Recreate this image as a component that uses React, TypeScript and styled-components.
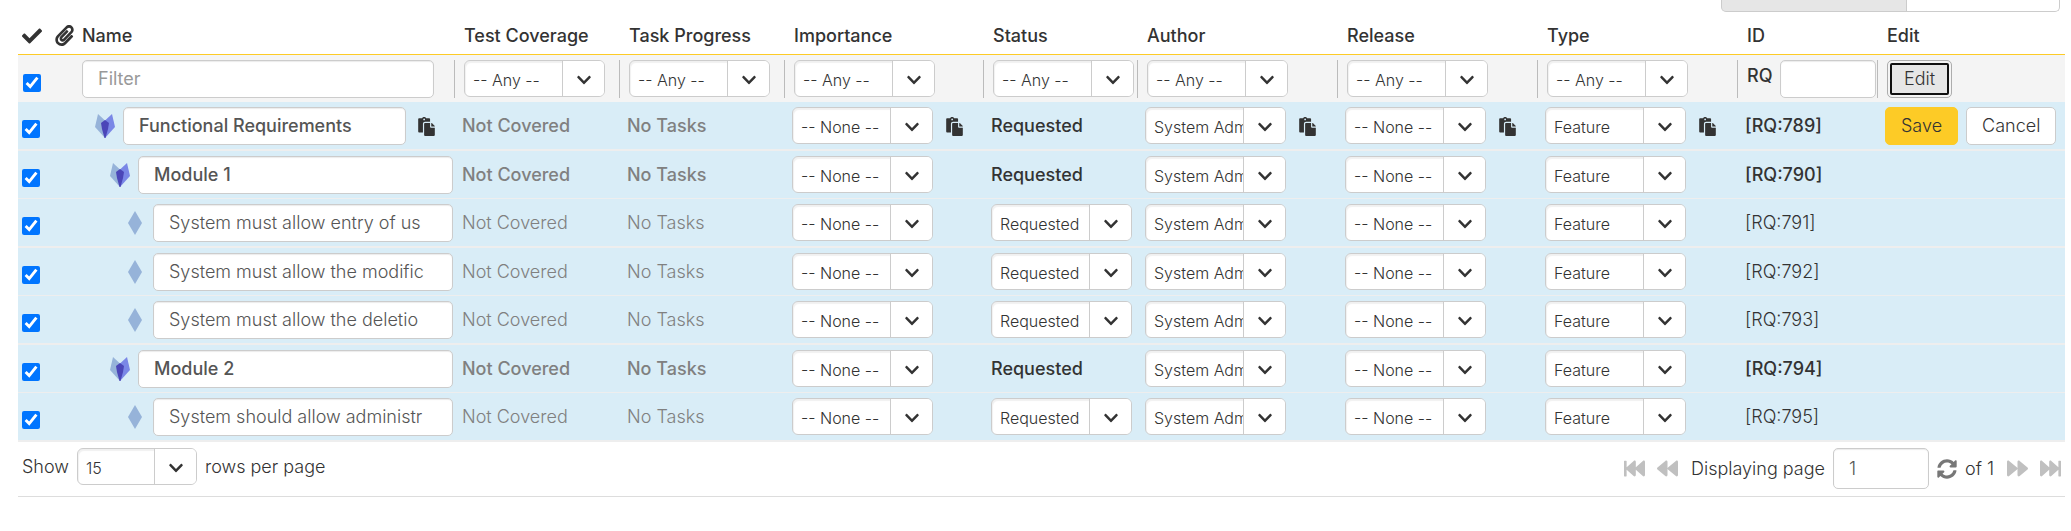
import React from "react";
import styled, { createGlobalStyle, css } from "styled-components";
import {
  FaBackward,
  FaCheck,
  FaChevronDown,
  FaFastBackward,
  FaFastForward,
  FaForward,
  FaPaperclip,
  FaPaste,
  FaSyncAlt,
} from "react-icons/fa";

const GlobalStyle = createGlobalStyle`
  *, *::before, *::after { box-sizing: border-box; }
  body {
    margin: 0;
    background: #fff;
    color: #333;
    font: 300 18px/38px Inter, "Open Sans", sans-serif;
  }
  button, input, select { font: inherit; color: inherit; margin: 0; }
`;

const Page = styled.main`
  padding: 0 6px 0 18px;
  overflow-x: auto;
`;

const Toolbar = styled.div`
  display: flex;
  justify-content: flex-end;
  padding-right: 5px;
`;

const ViewButton = styled.button<{ $active?: boolean }>`
  width: ${(p) => (p.$active ? 186 : 153)}px;
  height: 12px;
  padding: 0;
  border: 1px solid #ccc;
  border-top: 0;
  border-left-width: ${(p) => (p.$active ? 1 : 0)}px;
  border-radius: ${(p) => (p.$active ? "0 0 0 5px" : "0 0 5px 0")};
  background: ${(p) => (p.$active ? "#e6e6e6" : "#fff")};
`;

const Grid = styled.table`
  width: 100%;
  min-width: 1980px;
  table-layout: fixed;
  border-collapse: separate;
  border-spacing: 0;
`;

const HeadCell = styled.th<{ $flush?: boolean }>`
  padding: 5px 0 0 ${(p) => (p.$flush ? 4 : 10)}px;
  border-bottom: 1px solid #fdcb26;
  font-weight: 500;
  line-height: 37px;
  text-align: left;
  white-space: nowrap;
  svg { display: block; }
`;

const FilterRow = styled.tr`
  background: #f4f4f4;
`;

const FilterCell = styled.td`
  padding: 5px 0 4px;
  vertical-align: top;
`;

const FilterBox = styled.div<{ $divided?: boolean }>`
  display: flex;
  gap: 7px;
  height: 38px;
  padding-left: ${(p) => (p.$divided ? 9 : 4)}px;
  border-left: ${(p) => (p.$divided ? "1px solid #bbb" : "0")};
`;

const FilterLabel = styled.label`
  font-weight: 500;
  line-height: 32px;
`;

const DataRow = styled.tr<{ $group: boolean }>`
  background: #d9edf7;
  font-weight: ${(p) => (p.$group ? 500 : 300)};
  & > td { border-bottom: 1px solid #eee; }
  &:nth-child(odd) > td { border-bottom-width: 2px; }
`;

const cellBase = css`
  padding-top: 5px;
  padding-bottom: 4px;
  vertical-align: top;
  white-space: nowrap;
`;

const TextCell = styled.td<{ $muted?: boolean }>`
  ${cellBase}
  padding-left: 8px;
  color: ${(p) => (p.$muted ? "#808080" : "#333")};
`;

const ControlCell = styled.td`
  ${cellBase}
  padding-left: 8px;
`;

const ControlLine = styled.div`
  display: flex;
  align-items: center;
  gap: 12px;
  height: 38px;
`;

const ButtonLine = styled(ControlLine)`
  gap: 8px;
`;

const NameCell = styled.td<{ $level: number }>`
  ${cellBase}
  padding-left: ${(p) => 17 + p.$level * 15}px;
`;

const NameLine = styled.div`
  display: flex;
  align-items: center;
  gap: 8px;
  height: 38px;
  svg { flex: none; }
`;

const CheckCell = styled.td<{ $filter?: boolean }>`
  padding: ${(p) => (p.$filter ? "19px 0 0 5px" : "18px 0 0 4px")};
  vertical-align: top;
  line-height: 0;
`;

const Tick = styled.input`
  width: 18px;
  height: 18px;
`;

const TextBox = styled.input<{ $width?: number; $tall?: boolean }>`
  flex: ${(p) => (p.$width ? "none" : "1")};
  width: ${(p) => (p.$width ? `${p.$width}px` : "auto")};
  min-width: 0;
  height: ${(p) => (p.$tall ? 41 : 38)}px;
  padding: 0 15px;
  border: 1px solid #ccc;
  border-radius: 5px;
  background: #fff;
  box-shadow: inset 0 1px 1px rgba(0, 0, 0, 0.08);
  color: #555;
  font-weight: inherit;
  &::placeholder { color: #999; font-weight: 400; opacity: 1; }
`;

const FilterText = styled(TextBox)`
  margin-right: 20px;
`;

const CopyButton = styled.button`
  flex: none;
  display: flex;
  padding: 0;
  border: 0;
  background: none;
  color: #333;
`;

const NameCopyButton = styled(CopyButton)`
  margin: 0 17px 0 3px;
`;

const ComboFrame = styled.span<{ $width: number }>`
  display: grid;
  grid-template-columns: 1fr 42px;
  flex: none;
  align-self: flex-start;
  width: ${(p) => p.$width}px;
  height: 37px;
  border: 1px solid #ccc;
  border-radius: 6px;
  background: #fff;
  box-shadow: inset 1px 2px 1px rgba(0, 0, 0, 0.06);
  overflow: hidden;
`;

const ComboSelect = styled.select`
  grid-area: 1 / 1 / 2 / 3;
  width: 100%;
  padding: 0 0 0 8px;
  border: 0;
  background: none;
  appearance: none;
  font-size: 16px;
  font-weight: 300;
`;

const ComboArrow = styled.span`
  grid-area: 1 / 2 / 2 / 3;
  display: flex;
  align-items: center;
  justify-content: center;
  border-left: 1px solid #ccc;
  background: #fff;
  pointer-events: none;
`;

const Button = styled.button<{ $kind?: "primary" | "focused" }>`
  height: 38px;
  padding: 0 15px;
  border: 1px solid #ccc;
  border-radius: 5px;
  background: #fff;
  font-weight: 300;
  line-height: 36px;
  ${(p) =>
    p.$kind === "primary" &&
    css`
      border-color: #fdcb26;
      background: #fdcb26;
    `}
  ${(p) =>
    p.$kind === "focused" &&
    css`
      padding: 0 16px;
      border-color: #adadad;
      background: #e6e6e6;
      outline: 2px solid #101010;
      outline-offset: -5px;
      box-shadow: inset 0 0 0 3px #f4f4f4;
    `}
`;

const Pager = styled.footer`
  display: flex;
  justify-content: space-between;
  align-items: flex-start;
  min-width: 1980px;
  height: 55px;
  padding: 6px 4px 0;
  border-bottom: 1px solid #ddd;
`;

const PagerSide = styled.div`
  display: flex;
  align-items: center;
  gap: 8px;
  white-space: nowrap;
`;

const PageNav = styled.div`
  display: flex;
  gap: 12px;
  &:first-child { margin-right: 5px; }
  &:last-child { margin-left: 5px; }
`;

const NavButton = styled.button<{ $strong?: boolean }>`
  display: flex;
  padding: 0;
  border: 0;
  background: none;
  color: ${(p) => (p.$strong ? "#777" : "#c0c0c0")};
`;

function Combo({ label, value, width = 141 }: { label: string; value: string; width?: number }) {
  return (
    <ComboFrame $width={width}>
      <ComboSelect aria-label={label} defaultValue={value}>
        <option>{value}</option>
      </ComboSelect>
      <ComboArrow>
        <FaChevronDown size={16} />
      </ComboArrow>
    </ComboFrame>
  );
}

function GroupIcon() {
  return (
    <svg width="20" height="24" viewBox="0 0 20 24" aria-hidden="true">
      <path d="M3 0 10 6.500V24L0 13Z" fill="#96b3d9" />
      <path d="M17 0 10 6.500V24L20 13Z" fill="#7a87e6" />
      <path d="M10 6 14 9 13 15 10.500 24H9.500L7 15 6 9Z" fill="#4b46b8" />
    </svg>
  );
}

function ItemIcon() {
  return (
    <svg width="20" height="24" viewBox="0 0 20 24" aria-hidden="true">
      <path d="M10 0 17 12 10 24 3 12Z" fill="#96b3d9" />
    </svg>
  );
}

interface Requirement {
  id: number;
  name: string;
  level: number;
}

const requirements: Requirement[] = [
  { id: 789, name: "Functional Requirements", level: 0 },
  { id: 790, name: "Module 1", level: 1 },
  { id: 791, name: "System must allow entry of us", level: 2 },
  { id: 792, name: "System must allow the modific", level: 2 },
  { id: 793, name: "System must allow the deletio", level: 2 },
  { id: 794, name: "Module 2", level: 1 },
  { id: 795, name: "System should allow administr", level: 2 },
];

const columnWidths = [32, 28, 0, 165, 165, 199, 154, 200, 200, 200, 140, 188];
const titles = ["Test Coverage", "Task Progress", "Importance", "Status", "Author", "Release", "Type", "ID", "Edit"];
const filterTitles = titles.slice(0, 7);

function EditableCell({ label, value, first }: { label: string; value: string; first: boolean }) {
  return (
    <ControlCell>
      <ControlLine>
        <Combo label={label} value={value} />
        {first && (
          <CopyButton aria-label={`Copy ${label} to all rows`}>
            <FaPaste size={19} />
          </CopyButton>
        )}
      </ControlLine>
    </ControlCell>
  );
}

function RequirementRow({ item, first }: { item: Requirement; first: boolean }) {
  const group = item.level < 2;
  return (
    <DataRow $group={group}>
      <CheckCell>
        <Tick type="checkbox" defaultChecked aria-label={`Select RQ:${item.id}`} />
      </CheckCell>
      <td />
      <NameCell $level={item.level}>
        <NameLine>
          {group ? <GroupIcon /> : <ItemIcon />}
          <TextBox aria-label="Name" defaultValue={item.name} />
          {first && (
            <NameCopyButton aria-label="Copy Name to all rows">
              <FaPaste size={19} />
            </NameCopyButton>
          )}
        </NameLine>
      </NameCell>
      <TextCell $muted>Not Covered</TextCell>
      <TextCell $muted>No Tasks</TextCell>
      <EditableCell label="Importance" value="-- None --" first={first} />
      {group ? <TextCell>Requested</TextCell> : <EditableCell label="Status" value="Requested" first={false} />}
      <EditableCell label="Author" value="System Administrator" first={first} />
      <EditableCell label="Release" value="-- None --" first={first} />
      <EditableCell label="Type" value="Feature" first={first} />
      <TextCell>[RQ:{item.id}]</TextCell>
      <ControlCell>
        {first && (
          <ButtonLine>
            <Button $kind="primary">Save</Button>
            <Button>Cancel</Button>
          </ButtonLine>
        )}
      </ControlCell>
    </DataRow>
  );
}

export default function App() {
  return (
    <>
      <GlobalStyle />
      <Page>
        <Toolbar>
          <ViewButton $active aria-label="List view" />
          <ViewButton aria-label="Board view" />
        </Toolbar>
        <Grid>
          <colgroup>
            {columnWidths.map((w, i) => (
              <col key={i} width={w || undefined} />
            ))}
          </colgroup>
          <thead>
            <tr>
              <HeadCell $flush aria-label="Selected">
                <FaCheck size={20} />
              </HeadCell>
              <HeadCell $flush aria-label="Attachments">
                <FaPaperclip size={21} />
              </HeadCell>
              <HeadCell $flush>Name</HeadCell>
              {titles.map((t) => (
                <HeadCell key={t}>{t}</HeadCell>
              ))}
            </tr>
            <FilterRow>
              <CheckCell $filter>
                <Tick type="checkbox" defaultChecked aria-label="Select all" />
              </CheckCell>
              <td />
              <FilterCell>
                <FilterBox>
                  <FilterText placeholder="Filter" aria-label="Filter by name" />
                </FilterBox>
              </FilterCell>
              {filterTitles.map((t) => (
                <FilterCell key={t}>
                  <FilterBox $divided>
                    <Combo label={`Filter by ${t}`} value="-- Any --" />
                  </FilterBox>
                </FilterCell>
              ))}
              <FilterCell>
                <FilterBox $divided>
                  <FilterLabel htmlFor="rq-id">RQ</FilterLabel>
                  <TextBox id="rq-id" $width={96} />
                </FilterBox>
              </FilterCell>
              <FilterCell>
                <FilterBox $divided>
                  <Button $kind="focused">Edit</Button>
                </FilterBox>
              </FilterCell>
            </FilterRow>
          </thead>
          <tbody>
            {requirements.map((item, i) => (
              <RequirementRow key={item.id} item={item} first={i === 0} />
            ))}
          </tbody>
        </Grid>
        <Pager>
          <PagerSide>
            <span>Show</span>
            <Combo label="Rows per page" value="15" width={120} />
            <span>rows per page</span>
          </PagerSide>
          <PagerSide>
            <PageNav>
              <NavButton aria-label="First page">
                <FaFastBackward size={21} />
              </NavButton>
              <NavButton aria-label="Previous page">
                <FaBackward size={21} />
              </NavButton>
            </PageNav>
            <label htmlFor="page">Displaying page</label>
            <TextBox id="page" $width={96} $tall defaultValue="1" />
            <NavButton $strong aria-label="Refresh">
              <FaSyncAlt size={20} />
            </NavButton>
            <span>of 1</span>
            <PageNav>
              <NavButton aria-label="Next page">
                <FaForward size={21} />
              </NavButton>
              <NavButton aria-label="Last page">
                <FaFastForward size={21} />
              </NavButton>
            </PageNav>
          </PagerSide>
        </Pager>
      </Page>
    </>
  );
}
